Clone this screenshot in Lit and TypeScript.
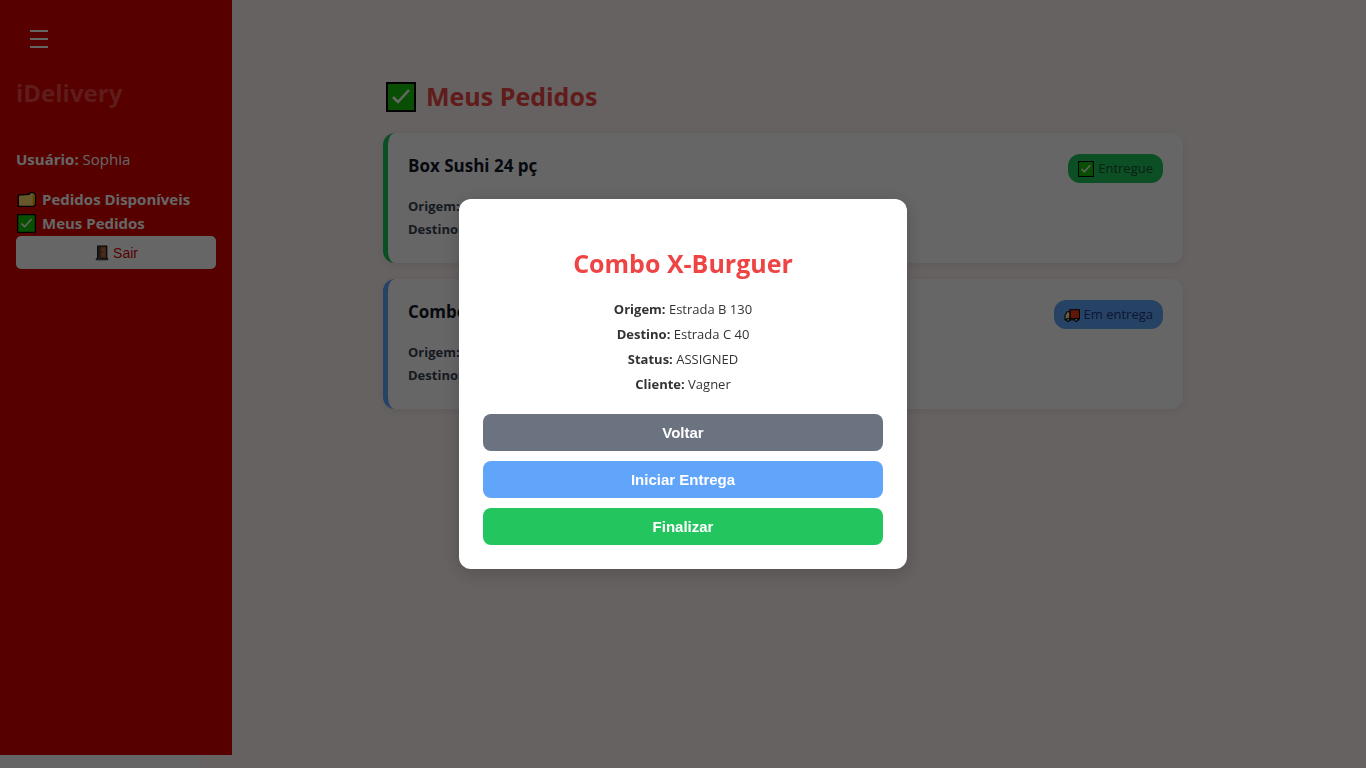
import { LitElement, html, css, nothing } from "lit";
import { customElement, state } from "lit/decorators.js";

const checkIcon = html`<svg class="emoji" viewBox="0 0 30 30" aria-hidden="true">
  <rect x="1" y="1" width="28" height="28" fill="#16c60c" stroke="#000" stroke-width="2" />
  <path d="M7 15l5 5L23 8" fill="none" stroke="#fff" stroke-width="2.500" />
</svg>`;

const folderIcon = html`<svg class="emoji" viewBox="0 0 30 30" aria-hidden="true">
  <path d="M2 8l17-1 2-3h5l3 3v16l-3 3H2z" fill="#ffdc6a" stroke="#000" stroke-width="2" stroke-linejoin="round" />
  <path d="M26 7v17" stroke="#f0b000" stroke-width="3" />
</svg>`;

const doorIcon = html`<svg class="emoji" viewBox="0 0 30 30" aria-hidden="true">
  <path d="M7 2h17v24H7z" fill="#9b5a33" stroke="#000" stroke-width="2" />
  <path d="M4 28V25h4V3h3v22h15v3z" fill="#6f7377" stroke="#000" stroke-width="1" />
  <path d="M14 6h7v6h-7zM14 15h7v7h-7z" fill="#b97046" />
</svg>`;

const truckIcon = html`<svg class="emoji" viewBox="0 0 30 30" aria-hidden="true">
  <path d="M11 5h18v17H11z" fill="#f03a17" stroke="#000" stroke-width="2" />
  <path d="M11 9H6l-4 6v9h9z" fill="#fff0a0" stroke="#000" stroke-width="2" stroke-linejoin="round" />
  <path d="M2 24h27" stroke="#000" stroke-width="2" />
  <circle cx="8" cy="24" r="3" fill="#ccc" stroke="#000" stroke-width="2" />
  <circle cx="23" cy="24" r="3" fill="#ccc" stroke="#000" stroke-width="2" />
</svg>`;

interface Pedido {
  nome: string;
  origem: string;
  destino: string;
  status: "entregue" | "entrega";
}

const pedidos: Pedido[] = [
  { nome: "Box Sushi 24 pç", origem: "", destino: "", status: "entregue" },
  { nome: "Combo X-Burguer", origem: "Estrada B 130", destino: "Estrada C 40", status: "entrega" },
];

@customElement("app-root")
export class AppRoot extends LitElement {
  static styles = css`
    :host {
      display: block;
      min-height: 100vh;
      background: #fff;
      color: #333;
      font-family: "Open Sans", "Noto Sans", sans-serif;
      font-size: 13px;
    }
    .layout {
      display: grid;
      grid-template-columns: 200px minmax(0, 1fr);
      min-height: 100vh;
    }
    .sidebar {
      box-sizing: border-box;
      width: 232px;
      margin-bottom: 13px;
      padding: 16px;
      background: #d60000;
      color: #fff;
      font-size: 15px;
      line-height: 24px;
      z-index: 1;
    }
    .menu {
      display: flex;
      padding: 14px;
      border: 0;
      background: none;
      color: #fff;
    }
    .menu svg {
      width: 18px;
      height: 18px;
    }
    .brand {
      margin: 13px 0 36px;
      color: #ef4444;
      font-size: 24px;
      line-height: 36px;
    }
    .user {
      margin: 0 0 16px;
    }
    .nav {
      display: flex;
      flex-direction: column;
      margin-bottom: 1px;
    }
    .nav a {
      display: flex;
      align-items: center;
      gap: 6px;
      padding-left: 1px;
      color: #fff;
      font-weight: 700;
      text-decoration: none;
    }
    .nav .emoji {
      width: 19px;
      height: 19px;
    }
    .sair {
      display: flex;
      align-items: center;
      justify-content: center;
      gap: 3px;
      width: 100%;
      height: 33px;
      border: 0;
      border-radius: 5px;
      background: #fff;
      color: #d60000;
      font: 14px "Liberation Sans", Arial, sans-serif;
    }
    .sair .emoji {
      width: 16px;
      height: 16px;
    }
    .main {
      padding: 76px 40px 40px;
      background: #fff5f3;
    }
    .content {
      display: flex;
      flex-direction: column;
      gap: 16px;
      max-width: 800px;
      margin: 0 auto;
    }
    .heading {
      display: flex;
      align-items: center;
      gap: 10px;
      margin: 0;
      padding-left: 3px;
      color: #ef4444;
      font-size: 25px;
      line-height: 41px;
    }
    .heading .emoji {
      width: 30px;
      height: 30px;
    }
    .card {
      display: flex;
      justify-content: space-between;
      align-items: flex-start;
      box-sizing: border-box;
      min-height: 130px;
      padding: 21px 20px;
      border-left: 5px solid #22c55e;
      border-radius: 12px;
      background: #fff;
      box-shadow: 0 2px 8px rgba(0, 0, 0, 0.08);
      color: #374151;
    }
    .card.entrega {
      border-left-color: #60a5fa;
    }
    .card h3 {
      margin: 0 0 18px;
      color: #111827;
      font-size: 17px;
      line-height: 23px;
    }
    .card p {
      margin: 0;
      line-height: 23px;
    }
    .tag {
      display: flex;
      align-items: center;
      gap: 4px;
      padding: 0 10px;
      border-radius: 12px;
      background: #22c55e;
      color: #14532d;
      font-weight: 500;
      line-height: 29px;
    }
    .entrega .tag {
      background: #60a5fa;
      color: #1e3a8a;
    }
    .tag .emoji {
      width: 16px;
      height: 16px;
    }
    .overlay {
      position: fixed;
      inset: 0;
      z-index: 2;
      display: flex;
      align-items: center;
      justify-content: center;
      background: rgba(0, 0, 0, 0.6);
    }
    .modal {
      width: 400px;
      max-width: 90%;
      padding: 24px;
      border-radius: 12px;
      background: #fff;
      box-shadow: 0 4px 20px rgba(0, 0, 0, 0.2);
      text-align: center;
    }
    .modal h2 {
      margin: 23px 0 16px;
      color: #ef4444;
      font-size: 25px;
      line-height: 35px;
    }
    .modal p {
      margin: 0;
      line-height: 25px;
    }
    .actions {
      display: flex;
      flex-direction: column;
      gap: 10px;
      margin-top: 17px;
    }
    .actions button {
      padding: 10px;
      border: 0;
      border-radius: 8px;
      background: #6b7280;
      color: #fff;
      font: bold 15px/17px "Liberation Sans", Arial, sans-serif;
    }
    .actions .iniciar {
      background: #60a5fa;
    }
    .actions .finalizar {
      background: #22c55e;
    }
  `;

  @state() private selecionado: Pedido | null = pedidos[1];

  private renderCard(p: Pedido) {
    return html`<article class="card ${p.status}" @click=${() => (this.selecionado = p)}>
      <div>
        <h3>${p.nome}</h3>
        <p><strong>Origem:</strong> ${p.origem}</p>
        <p><strong>Destino:</strong> ${p.destino}</p>
      </div>
      <span class="tag">
        ${p.status === "entregue" ? checkIcon : truckIcon}
        ${p.status === "entregue" ? "Entregue" : "Em entrega"}
      </span>
    </article>`;
  }

  private renderModal(p: Pedido) {
    return html`<div class="overlay">
      <div class="modal" role="dialog" aria-modal="true" aria-labelledby="titulo">
        <h2 id="titulo">${p.nome}</h2>
        <p><strong>Origem:</strong> ${p.origem}</p>
        <p><strong>Destino:</strong> ${p.destino}</p>
        <p><strong>Status:</strong> ASSIGNED</p>
        <p><strong>Cliente:</strong> Vagner</p>
        <div class="actions">
          <button @click=${() => (this.selecionado = null)}>Voltar</button>
          <button class="iniciar">Iniciar Entrega</button>
          <button class="finalizar">Finalizar</button>
        </div>
      </div>
    </div>`;
  }

  render() {
    return html`<div class="layout">
        <aside class="sidebar">
          <button class="menu" aria-label="Menu">
            <svg viewBox="0 0 18 18" aria-hidden="true">
              <path d="M0 1h18M0 9h18M0 17h18" stroke="currentColor" stroke-width="2" />
            </svg>
          </button>
          <h2 class="brand">iDelivery</h2>
          <p class="user"><strong>Usuário:</strong> Sophia</p>
          <nav class="nav">
            <a href="#disponiveis">${folderIcon}Pedidos Disponíveis</a>
            <a href="#meus">${checkIcon}Meus Pedidos</a>
          </nav>
          <button class="sair">${doorIcon}Sair</button>
        </aside>
        <main class="main">
          <div class="content">
            <h1 class="heading">${checkIcon}Meus Pedidos</h1>
            ${pedidos.map((p) => this.renderCard(p))}
          </div>
        </main>
      </div>
      ${this.selecionado ? this.renderModal(this.selecionado) : nothing}`;
  }
}
